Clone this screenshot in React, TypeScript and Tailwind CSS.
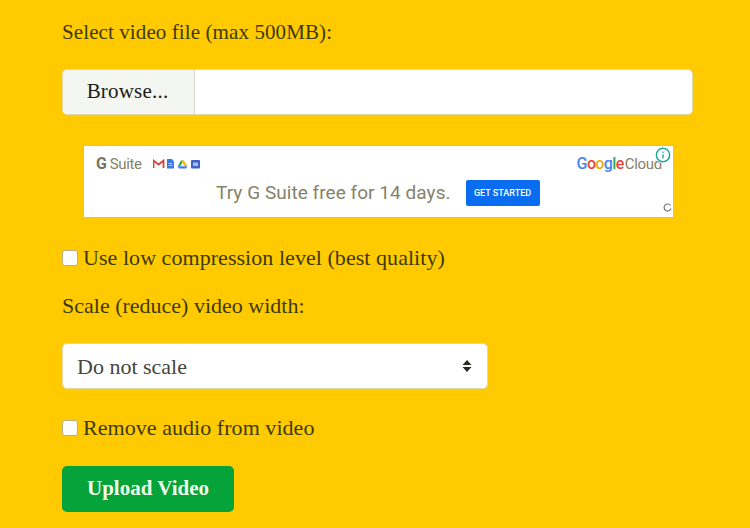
import { Info } from 'lucide-react'

const serif = "font-['Liberation_Serif',serif]"

function GoogleWord() {
  return (
    <span className="font-['Roboto',sans-serif] text-[16px] font-medium tracking-[-0.6px]">
      <span className="text-[#4285f4]">G</span>
      <span className="text-[#ea4335]">o</span>
      <span className="text-[#e8b008]">o</span>
      <span className="text-[#4285f4]">g</span>
      <span className="text-[#34a853]">l</span>
      <span className="text-[#ea4335]">e</span>
    </span>
  )
}

function AppIcons() {
  return (
    <svg width="48" height="12" viewBox="0 0 48 12" className="ml-[11px]">
      {/* gmail */}
      <path d="M0.5 10V2.5L5.5 6.5L10.5 2.5V10" fill="none" stroke="#d64535" strokeWidth="1.8" />
      {/* docs */}
      <path d="M14 1H19L21 3.5V10.5H14Z" fill="#3b78e7" />
      <path d="M15.5 5.5H19.5M15.5 7.5H19.5" stroke="#cfe0fb" strokeWidth="0.8" />
      {/* drive */}
      <path d="M25 8L27.8 2.5H30.5L27.5 8Z" fill="#34a853" />
      <path d="M27.8 2.5H31L34.5 8H31.5Z" fill="#f2bd1d" />
      <path d="M24.5 8.2H34.5L33 10.5H26Z" fill="#3f7fe8" />
      {/* calendar */}
      <rect x="38" y="2" width="9" height="8.5" rx="1" fill="#3f62c4" />
      <rect x="40" y="4.5" width="5" height="3.5" fill="#a9bdf0" />
    </svg>
  )
}

function Checkbox({ label }: { label: string }) {
  return (
    <label className="flex items-center text-[22px] leading-[26px] tracking-[0.05px] text-[#3d3a08]">
      <span className="mr-[5px] h-[16px] w-[16px] rounded-[3px] border border-[#b9ae84] bg-white" />
      {label}
    </label>
  )
}

export default function App() {
  return (
    <div className={`${serif} h-[528px] w-[750px] overflow-hidden bg-[#ffcb00] pl-[62px] pt-[19px]`}>
      <p className="text-[21px] leading-[26px] tracking-[0.1px] text-[#3d3a08]">Select video file (max 500MB):</p>

      <div className="mt-[24px] flex h-[46px] w-[631px] overflow-hidden rounded-[5px] border border-[#e2d9a8] bg-white">
        <div className="flex w-[132px] items-center justify-center border-r border-[#d8d8d0] bg-[#f3f6f1] pr-[2px] text-[21px] tracking-[0.2px] text-[#1c1c14]">
          Browse...
        </div>
      </div>

      <div className="ml-[21px] mt-[30px] flex h-[73px] w-[591px] flex-col border border-[#cfc384] bg-white font-['Roboto',sans-serif]">
        <div className="relative flex h-[33px] items-center justify-between pl-[12px] pr-[11px] pt-[2px]">
          <div className="flex items-center">
            <span className="text-[15px] tracking-[-0.4px] text-[#85826a]">
              <span className="text-[16px] font-bold text-[#77745c]">G</span> Suite
            </span>
            <AppIcons />
          </div>
          <div className="flex items-baseline gap-[1px]">
            <GoogleWord />
            <span className="text-[15px] tracking-[-0.3px] text-[#85826a]">Cloud</span>
          </div>
          <Info className="absolute right-[2px] top-[1px] h-[16px] w-[16px] rounded-full bg-white text-[#1aa9a0]" strokeWidth={2.2} />
        </div>
        <div className="relative flex items-center pl-[132px]">
          <span className="text-[19px] tracking-[0.05px] text-[#85826a]">Try G Suite free for 14 days.</span>
          <span className="ml-[15px] flex h-[26px] w-[74px] items-center justify-center rounded-[2px] bg-[#0a6cf0] text-[9px] font-medium text-white">
            GET STARTED
          </span>
          <svg width="9" height="9" viewBox="0 0 9 9" className="absolute bottom-[-4px] right-[1px]">
            <path d="M7.5 2.5A3.5 3.5 0 1 0 8 5.5" fill="none" stroke="#77776c" strokeWidth="1.2" />
          </svg>
        </div>
      </div>

      <div className="mt-[27px]">
        <Checkbox label="Use low compression level (best quality)" />
      </div>

      <p className="mt-[22px] text-[22px] leading-[26px] text-[#3d3a08]">Scale (reduce) video width:</p>

      <div className="mt-[24px] flex h-[46px] w-[426px] items-center justify-between rounded-[5px] border border-[#e2d9a8] bg-white pl-[14px] pr-[15px] text-[22px] text-[#45453c]">
        Do not scale
        <svg width="10" height="14" viewBox="0 0 10 14">
          <path d="M5 1L9.5 6H0.5Z M5 13L0.5 8H9.5Z" fill="#2c2c24" />
        </svg>
      </div>

      <div className="mt-[26px]">
        <Checkbox label="Remove audio from video" />
      </div>

      <button className="mt-[25px] h-[46px] w-[172px] rounded-[5px] bg-[#06a23a] text-[21px] font-bold text-[#f0fbe6]">
        Upload Video
      </button>
    </div>
  )
}
